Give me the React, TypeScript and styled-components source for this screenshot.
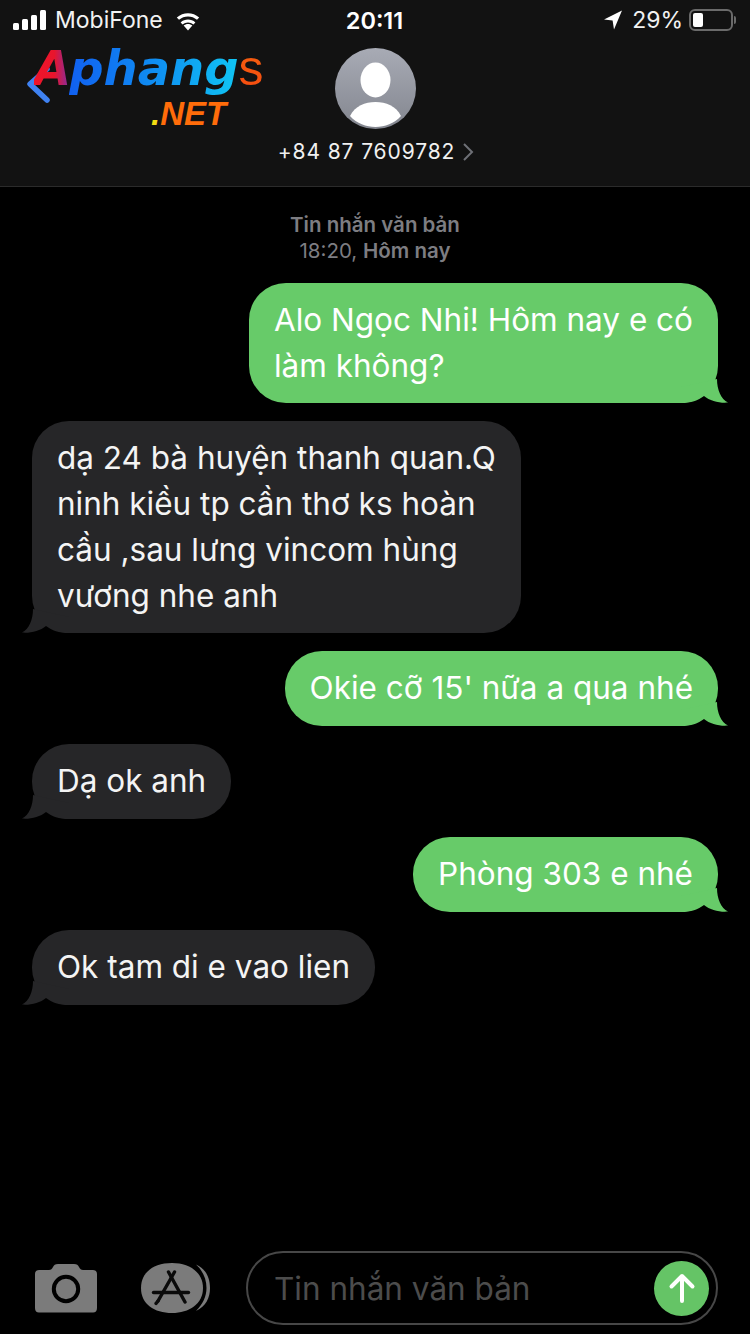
import React from 'react'
import styled, { createGlobalStyle } from 'styled-components'

const GlobalStyle = createGlobalStyle`
  html, body {
    margin: 0;
    padding: 0;
    background: #000;
  }
  * {
    box-sizing: border-box;
  }
`

type Message = {
  id: number
  sent: boolean
  lines: string[]
}

const messages: Message[] = [
  { id: 1, sent: true, lines: ['Alo Ngọc Nhi! Hôm nay e có', 'làm không?'] },
  {
    id: 2,
    sent: false,
    lines: ['dạ 24 bà huyện thanh quan.Q', 'ninh kiều tp cần thơ ks hoàn', 'cầu ,sau lưng vincom hùng', 'vương nhe anh'],
  },
  { id: 3, sent: true, lines: ["Okie cỡ 15' nữa a qua nhé"] },
  { id: 4, sent: false, lines: ['Dạ ok anh'] },
  { id: 5, sent: true, lines: ['Phòng 303 e nhé'] },
  { id: 6, sent: false, lines: ['Ok tam di e vao lien'] },
]

function BubbleTail({ sent }: { sent: boolean }) {
  return (
    <TailSvg $sent={sent} viewBox="0 0 50 24" width="50" height="24">
      <path
        d="M38 0 C38 11 42 20 49 23.6 C41 24.4 31 22 25 17 C19 21.5 12 24 2 24 L2 8 Z"
        fill={sent ? '#67cb69' : '#262628'}
      />
    </TailSvg>
  )
}

function SignalIcon() {
  return (
    <svg width="33" height="21" viewBox="0 0 33 21">
      <rect x="0" y="13" width="6" height="7" rx="1.5" fill="#fff" />
      <rect x="9" y="9" width="6" height="11" rx="1.5" fill="#fff" />
      <rect x="18" y="5" width="6" height="15" rx="1.5" fill="#fff" />
      <rect x="27" y="0" width="6" height="20" rx="1.5" fill="#fff" />
    </svg>
  )
}

function WifiIcon() {
  return (
    <svg width="30" height="22" viewBox="0 0 30 22">
      <path d="M15 21.5 L10.6 16.6 C13 14.4 17 14.4 19.4 16.6 Z" fill="#fff" />
      <path d="M7.6 13.4 L9.6 15.5 C12.6 12.8 17.4 12.8 20.4 15.5 L22.4 13.4 C18.2 9.6 11.8 9.6 7.6 13.4 Z" fill="#fff" />
      <path d="M3.8 9.5 L6 11.8 C11 7.3 19 7.3 24 11.8 L26.2 9.5 C19.8 3.7 10.2 3.7 3.8 9.5 Z" transform="translate(0 -1)" fill="#fff" />
      <path d="M0.3 6.2 L2.5 8.4 C9.6 1.8 20.4 1.8 27.5 8.4 L29.7 6.2 C21.4 -1.6 8.6 -1.6 0.3 6.2 Z" transform="translate(0 0.4)" fill="#fff" opacity="0" />
    </svg>
  )
}

function LocationIcon() {
  return (
    <svg width="18" height="20" viewBox="0 0 18 20">
      <path d="M18 0.5 L0 9.6 L8.6 10.4 L10 19.6 Z" fill="#fff" />
    </svg>
  )
}

function AvatarIcon() {
  return (
    <svg width="81" height="81" viewBox="0 0 81 81">
      <defs>
        <linearGradient id="avatarBg" x1="0" y1="0" x2="0" y2="1">
          <stop offset="0" stopColor="#a8abb5" />
          <stop offset="1" stopColor="#83868f" />
        </linearGradient>
      </defs>
      <circle cx="40.5" cy="40.5" r="40.5" fill="url(#avatarBg)" />
      <ellipse cx="40.5" cy="32" rx="15" ry="17.5" fill="#fff" />
      <path d="M15 68 C20 58 30 54 40.5 54 C51 54 61 58 66 68 C59 75.5 50 79 40.5 79 C31 79 22 75.5 15 68 Z" fill="#fff" />
    </svg>
  )
}

function CameraIcon() {
  return (
    <svg width="62" height="49" viewBox="0 0 62 49">
      <path
        d="M4 6 H14 C16 6 17 5 18 3 C19 1 20 0 23 0 H39 C42 0 43 1 44 3 C45 5 46 6 48 6 H58 C60.5 6 62 7.5 62 10 V44 C62 47 60.5 48.5 58 48.5 H4 C1.5 48.5 0 47 0 44 V10 C0 7.5 1.5 6 4 6 Z"
        fill="#7b7b7b"
      />
      <circle cx="31" cy="25" r="12.2" fill="none" stroke="#000" strokeWidth="4" />
    </svg>
  )
}

function AppStoreIcon() {
  return (
    <svg width="70" height="50" viewBox="0 0 70 50">
      <path d="M55 1.5 C65 6 69 15 69 25 C69 35 65 43 55 48 C62 41 65.5 33 65.5 25 C65.5 16 62 8 55 1.5 Z" fill="#7b7b7b" />
      <path
        d="M31 0 C48 0 62 9 62 25 C62 41 48 50 31 50 C13 50 0 41 0 25 C0 9 13 0 31 0 Z"
        fill="#7b7b7b"
      />
      <g fill="none" stroke="#0a0a0a" strokeWidth="3.4" strokeLinecap="round">
        <path d="M33.5 9 L17 38" />
        <path d="M27.5 9 L44 39" />
        <path d="M12.5 29.5 H47.5" />
        <path d="M17 38 L15 40.5" />
      </g>
    </svg>
  )
}

export default function App() {
  return (
    <Screen>
      <GlobalStyle />
      <Header>
        <StatusBar>
          <StatusLeft>
            <SignalIcon />
            <Carrier>MobiFone</Carrier>
            <WifiIcon />
          </StatusLeft>
          <Clock>20:11</Clock>
          <StatusRight>
            <LocationIcon />
            <Percent>29%</Percent>
            <Battery>
              <BatteryLevel />
            </Battery>
            <BatteryNub />
          </StatusRight>
        </StatusBar>
        <Logo>
          <LogoChevron viewBox="0 0 26 40" width="26" height="40">
            <path d="M21 5 L4 20 L21 36" fill="none" stroke="#3f82f2" strokeWidth="5.5" strokeLinecap="round" strokeLinejoin="round" />
          </LogoChevron>
          <LogoTop>
            <LogoA>A</LogoA>
            <LogoMain>phang</LogoMain>
            <LogoS>s</LogoS>
          </LogoTop>
          <LogoNet>
            <LogoDot>.</LogoDot>NET
          </LogoNet>
        </Logo>
        <Contact>
          <AvatarIcon />
          <PhoneRow>
            <Phone>+84 87 7609782</Phone>
            <svg width="12" height="20" viewBox="0 0 12 20">
              <path d="M2 2 L10 10 L2 18" fill="none" stroke="#6e7076" strokeWidth="2" />
            </svg>
          </PhoneRow>
        </Contact>
      </Header>

      <Thread>
        <DateLabel>
          <DateLine>
            <strong>Tin nhắn văn bản</strong>
          </DateLine>
          <DateLine>
            18:20, <strong>Hôm nay</strong>
          </DateLine>
        </DateLabel>
        <Messages>
          {messages.map((message) => (
            <Bubble key={message.id} $sent={message.sent}>
              {message.lines.map((line) => (
                <BubbleLine key={line}>{line}</BubbleLine>
              ))}
              <BubbleTail sent={message.sent} />
            </Bubble>
          ))}
        </Messages>
      </Thread>

      <Composer>
        <CameraIcon />
        <AppStoreIcon />
        <InputPill>
          <Placeholder>Tin nhắn văn bản</Placeholder>
          <SendButton>
            <svg width="28" height="30" viewBox="0 0 28 30">
              <path d="M14 28 V3 M3.5 13.5 L14 3 L24.5 13.5" fill="none" stroke="#fff" strokeWidth="4" strokeLinecap="round" strokeLinejoin="round" />
            </svg>
          </SendButton>
        </InputPill>
      </Composer>
    </Screen>
  )
}

const Screen = styled('div')`
  width: 750px;
  height: 1334px;
  display: flex;
  flex-direction: column;
  background: #000;
  overflow: hidden;
  font-family: Inter, 'Noto Sans', 'Liberation Sans', sans-serif;
  color: #fff;
`

const Header = styled('header')`
  position: relative;
  height: 187px;
  flex: none;
  background: #121212;
  border-bottom: 1px solid #2b2b2b;
`

const StatusBar = styled('div')`
  height: 40px;
  display: grid;
  grid-template-columns: 1fr auto 1fr;
  align-items: center;
  padding: 0 14px 0 13px;
`

const StatusLeft = styled('div')`
  display: flex;
  align-items: center;
  gap: 9px;
`

const Carrier = styled('span')`
  font-size: 23px;
  margin-right: 1px;
  color: #f2f2f2;
`

const Clock = styled('span')`
  font-size: 23.5px;
  font-weight: 600;
`

const StatusRight = styled('div')`
  display: flex;
  align-items: center;
  justify-content: flex-end;
`

const Percent = styled('span')`
  font-size: 23px;
  margin: 0 6px 0 10px;
  color: #f2f2f2;
`

const Battery = styled('div')`
  width: 44px;
  height: 22px;
  border: 2px solid #6a6a6a;
  border-radius: 6px;
  padding: 2px;
`

const BatteryLevel = styled('div')`
  width: 10px;
  height: 100%;
  background: #fff;
  border-radius: 2px;
`

const BatteryNub = styled('div')`
  width: 2px;
  height: 8px;
  margin-left: 1px;
  background: #6a6a6a;
  border-radius: 0 2px 2px 0;
`

const Logo = styled('div')`
  position: absolute;
  left: 26px;
  top: 44px;
  width: 240px;
  height: 86px;
`

const LogoChevron = styled('svg')`
  position: absolute;
  left: 0;
  top: 20px;
`

const LogoTop = styled('div')`
  position: absolute;
  left: 8px;
  top: -4px;
  display: flex;
  align-items: baseline;
  font-family: 'DejaVu Sans', sans-serif;
  font-size: 48px;
  font-weight: 700;
  font-style: italic;
  line-height: 56px;
  white-space: nowrap;
`

const LogoA = styled('span')`
  background: linear-gradient(90deg, #f0142a 0%, #e8152c 55%, #7a2fb0 100%);
  -webkit-background-clip: text;
  background-clip: text;
  color: transparent;
  margin-right: -2px;
`

const LogoMain = styled('span')`
  background: linear-gradient(90deg, #1160f0 0%, #0f8df2 50%, #10c6f4 100%);
  -webkit-background-clip: text;
  background-clip: text;
  color: transparent;
`

const LogoS = styled('span')`
  font-family: 'Liberation Sans', sans-serif;
  font-weight: 400;
  font-style: normal;
  font-size: 50px;
  background: linear-gradient(180deg, #f5630f 0%, #f54a10 100%);
  -webkit-background-clip: text;
  background-clip: text;
  color: transparent;
`

const LogoNet = styled('div')`
  position: absolute;
  left: 125px;
  top: 52px;
  font-family: 'Liberation Sans', sans-serif;
  font-size: 33px;
  line-height: 36px;
  font-weight: 700;
  font-style: italic;
  color: #ff6c0a;
`

const LogoDot = styled('span')`
  color: #f2dc12;
`

const Contact = styled('div')`
  display: flex;
  flex-direction: column;
  align-items: center;
  padding-top: 8px;
`

const PhoneRow = styled('div')`
  display: flex;
  align-items: center;
  gap: 7px;
  margin-top: 10px;
  margin-left: 2px;
`

const Phone = styled('span')`
  font-size: 21px;
  line-height: 26px;
  letter-spacing: 0.9px;
  color: #f0f0f0;
`

const Thread = styled('main')`
  flex: 1;
  display: flex;
  flex-direction: column;
  padding: 25px 32px 0;
`

const DateLabel = styled('div')`
  text-align: center;
  color: #7d7d82;
  font-size: 20.5px;
  line-height: 26px;
  margin-bottom: 19px;

  strong {
    font-weight: 600;
  }
`

const DateLine = styled('div')``

const Messages = styled('div')`
  display: flex;
  flex-direction: column;
  gap: 18px;
`

const Bubble = styled('div')<{ $sent: boolean }>`
  position: relative;
  align-self: ${(p) => (p.$sent ? 'flex-end' : 'flex-start')};
  min-height: 75px;
  padding: 14px 25px;
  border-radius: 37px;
  background: ${(p) => (p.$sent ? '#67cb69' : '#262628')};
  color: ${(p) => (p.$sent ? '#fff' : '#f4f4f4')};
  font-size: 31.5px;
  line-height: 46px;
`

const BubbleLine = styled('div')`
  position: relative;
  z-index: 1;
  white-space: nowrap;
`

const TailSvg = styled('svg')<{ $sent: boolean }>`
  position: absolute;
  bottom: 0;
  ${(p) => (p.$sent ? 'right: -11px;' : 'left: -11px; transform: scaleX(-1);')}
`

const Composer = styled('footer')`
  flex: none;
  height: 83px;
  display: flex;
  align-items: center;
  padding: 0 32px 9px 35px;
  gap: 44px;

  svg:nth-child(2) {
    margin-left: 0;
  }
`

const InputPill = styled('div')`
  flex: 1;
  height: 74px;
  margin-left: -9px;
  display: flex;
  align-items: center;
  justify-content: space-between;
  padding: 0 7px 0 26px;
  border: 2px solid #474747;
  border-radius: 37px;
`

const Placeholder = styled('span')`
  font-size: 31.5px;
  color: #4c4c4c;
`

const SendButton = styled('div')`
  width: 55px;
  height: 55px;
  display: flex;
  align-items: center;
  justify-content: center;
  border-radius: 50%;
  background: #65c466;
`
